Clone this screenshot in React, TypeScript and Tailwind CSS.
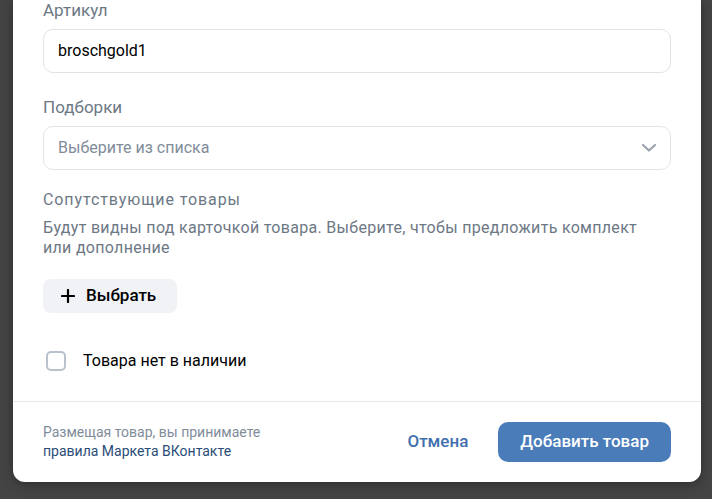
import React from "react";

function Plus() {
  return (
    <svg width="14" height="14" viewBox="0 0 14 14" fill="none">
      <path d="M7 1v12M1 7h12" stroke="#000" strokeWidth="2.2" strokeLinecap="round" />
    </svg>
  );
}

function Chevron() {
  return (
    <svg width="16" height="10" viewBox="0 0 16 10" fill="none">
      <path d="M2 2l6 5.5L14 2" stroke="#99a2ad" strokeWidth="2.2" strokeLinecap="round" strokeLinejoin="round" />
    </svg>
  );
}

export default function App() {
  return (
    <div
      className="h-[499px] w-[712px] overflow-hidden bg-[#444444]"
      style={{ fontFamily: "Roboto, 'Noto Sans', sans-serif" }}
    >
      <div className="ml-[13px] w-[688px] rounded-b-[12px] bg-white shadow-[0_2px_12px_rgba(0,0,0,0.35)]">
        <div className="px-[30px] pb-[20px]">
          <div className="text-[17px] leading-5 text-[#6d7885]">Артикул</div>
          <div className="mt-[9px] flex h-[44px] items-center rounded-[10px] border border-[#e1e3e6] px-[14px] text-[16px] text-[#000]">
            broschgold1
          </div>

          <div className="mt-[24px] text-[17px] leading-5 text-[#6d7885]">Подборки</div>
          <div className="mt-[9px] flex h-[44px] items-center justify-between rounded-[10px] border border-[#e1e3e6] pl-[14px] pr-[13px] text-[16px] text-[#818c99]">
            <span>Выберите из списка</span>
            <Chevron />
          </div>

          <div className="mt-[20px] text-[16px] leading-5 tracking-[0.9px] text-[#6d7885]">
            Сопутствующие товары
          </div>
          <div className="mt-[8px] w-[620px] text-[16px] leading-5 tracking-[0.3px] text-[#6d7885]">
            Будут видны под карточкой товара. Выберите, чтобы предложить комплект или дополнение
          </div>

          <button className="mt-[21px] flex h-[34px] items-center gap-[11px] rounded-[8px] bg-[#f0f2f5] pl-[18px] pr-[21px] text-[17px] font-medium text-[#000]">
            <Plus />
            <span>Выбрать</span>
          </button>

          <label className="mt-[38px] flex items-center gap-[17px]">
            <span className="ml-[3px] block h-[20px] w-[20px] rounded-[5px] border-2 border-[#b8c1cc]" />
            <span className="text-[16px] leading-5 text-[#000]">Товара нет в наличии</span>
          </label>
        </div>

        <div className="mt-[10px] h-px bg-[#e7e8ec]" />

        <div className="flex h-[80px] items-center justify-between px-[30px]">
          <div className="text-[14px] leading-[19px]">
            <div className="text-[#818c99]">Размещая товар, вы принимаете</div>
            <div className="text-[#2a4d78]">правила Маркета ВКонтакте</div>
          </div>
          <div className="flex items-center gap-[30px]">
            <button className="text-[17px] font-medium text-[#3f70ad]">Отмена</button>
            <button className="h-[40px] rounded-[10px] bg-[#4a7cba] px-[22px] text-[17px] font-medium text-white">
              Добавить товар
            </button>
          </div>
        </div>
      </div>
    </div>
  );
}
